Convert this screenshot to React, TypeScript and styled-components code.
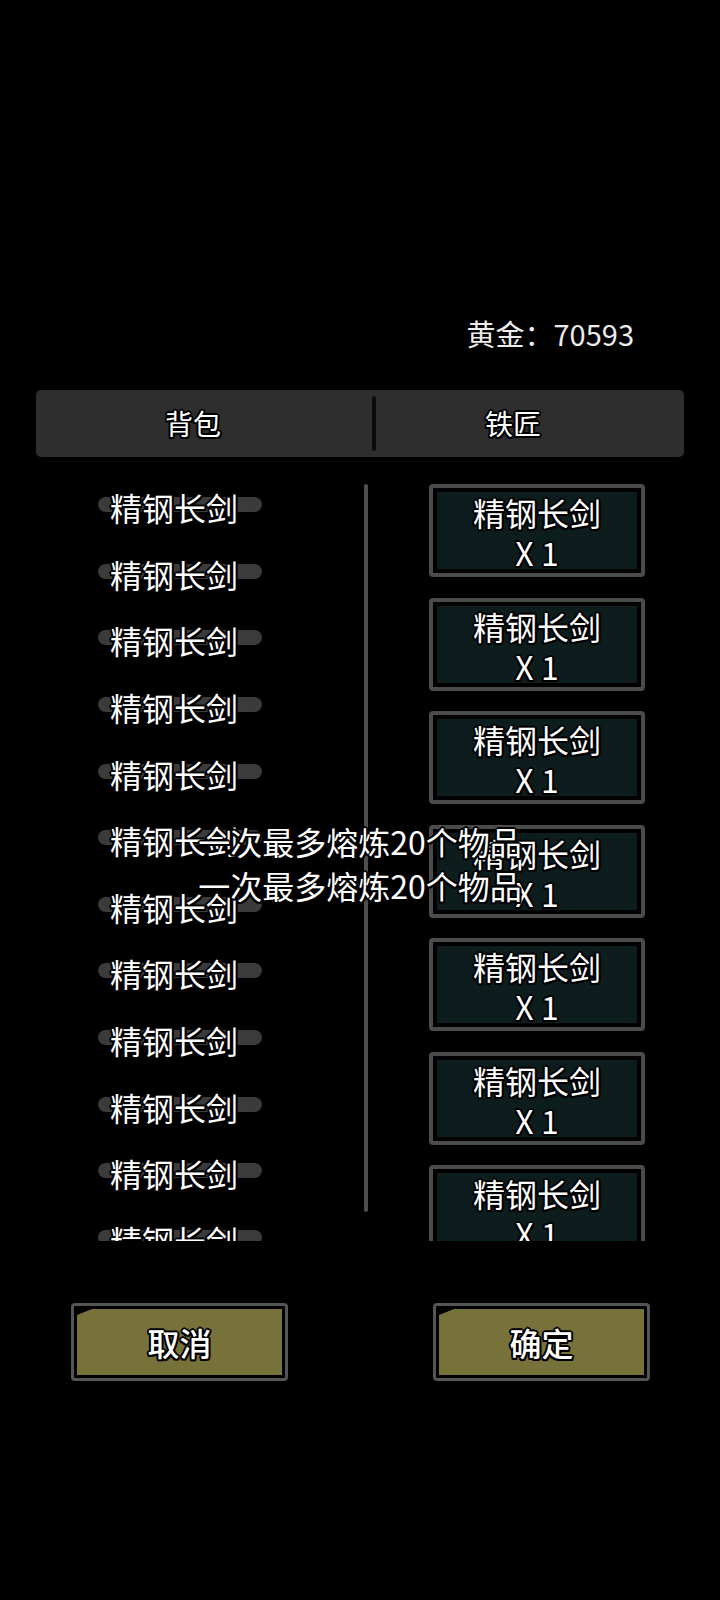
import React from "react";
import styled, { createGlobalStyle } from "styled-components";

const outline = `
  text-shadow:
    -1.5px -1.5px 0 #000, 1.5px -1.5px 0 #000, -1.5px 1.5px 0 #000, 1.5px 1.5px 0 #000,
    0 -2px 0 #000, 0 2px 0 #000, -2px 0 0 #000, 2px 0 0 #000;
`;

const GlobalStyle = createGlobalStyle`
  body {
    margin: 0;
    padding: 0;
    background-color: #000;
    font-family: "Noto Sans CJK SC", "Noto Sans", sans-serif;
    color: #fff;
  }
`;

const backpack = Array.from({ length: 12 }, () => "精钢长剑");
const smithy = Array.from({ length: 7 }, () => ({ name: "精钢长剑", count: 1 }));

const App: React.FC = () => {
  return (
    <Page>
      <GlobalStyle />
      <GoldRow>黄金：70593</GoldRow>
      <Tabs>
        <Tab $width={336} $shift={22}>背包</Tab>
        <TabDivider />
        <Tab $shift={34}>铁匠</Tab>
      </Tabs>
      <Content>
        <BagList>
          {backpack.map((name, i) => (
            <BagItem key={i}>
              <Pill />
              <BagLabel>{name}</BagLabel>
            </BagItem>
          ))}
        </BagList>
        <ScrollBar />
        <SmithList>
          {smithy.map((item, i) => (
            <Card key={i}>
              <CardInner>
                <CardLine>{item.name}</CardLine>
                <CardLine>X {item.count}</CardLine>
              </CardInner>
            </Card>
          ))}
        </SmithList>
      </Content>
      <ButtonRow>
        <Button>
          <ButtonFace>取消</ButtonFace>
        </Button>
        <Button>
          <ButtonFace>确定</ButtonFace>
        </Button>
      </ButtonRow>
      <ToastStack>
        <Toast>一次最多熔炼20个物品</Toast>
        <Toast>一次最多熔炼20个物品</Toast>
      </ToastStack>
    </Page>
  );
};

export default App;

const Page = styled.div`
  position: relative;
  width: 720px;
  min-height: 1600px;
  padding-top: 313px;
  box-sizing: border-box;
  background: #000;
`;

const GoldRow = styled.div`
  display: flex;
  justify-content: flex-end;
  padding-right: 86px;
  height: 40px;
  line-height: 40px;
  font-size: 29px;
  color: #ececec;
`;

const Tabs = styled.div`
  display: flex;
  align-items: center;
  margin: 37px 36px 0 36px;
  height: 67px;
  background-color: #2e2e2e;
  border-radius: 5px;
`;

const Tab = styled.div<{ $width?: number; $shift: number }>`
  flex: ${(p) => (p.$width ? `0 0 ${p.$width}px` : "1")};
  box-sizing: border-box;
  text-align: center;
  padding-right: ${(p) => p.$shift}px;
  font-size: 28px;
  line-height: 67px;
  color: #fff;
  ${outline}
`;

const TabDivider = styled.div`
  width: 4px;
  height: 55px;
  border-radius: 2px;
  background-color: #0c0c0c;
`;

const Content = styled.div`
  display: flex;
  margin-top: 17px;
  height: 767px;
  overflow: hidden;
`;

const BagList = styled.div`
  width: 364px;
  display: flex;
  flex-direction: column;
`;

const BagItem = styled.div`
  display: grid;
  align-items: center;
  justify-items: start;
  height: 66.6px;
  flex-shrink: 0;
`;

const Pill = styled.div`
  grid-area: 1 / 1;
  margin-left: 98px;
  margin-top: -5px;
  width: 164px;
  height: 15px;
  border-radius: 8px;
  background-color: #3b3b3b;
`;

const BagLabel = styled.div`
  grid-area: 1 / 1;
  margin-left: 110px;
  font-size: 32px;
  line-height: 40px;
  color: #fff;
  ${outline}
`;

const ScrollBar = styled.div`
  width: 4px;
  height: 728px;
  margin-top: 10px;
  border-radius: 2px;
  background-color: #4e4e4e;
  flex-shrink: 0;
`;

const SmithList = styled.div`
  display: flex;
  flex-direction: column;
  gap: 20.5px;
  padding: 10px 0 0 61px;
`;

const Card = styled.div`
  width: 216px;
  height: 93px;
  box-sizing: border-box;
  border: 4px solid #4b4b4b;
  border-radius: 4px;
  padding: 4px;
  background-color: #000;
  flex-shrink: 0;
`;

const CardInner = styled.div`
  height: 100%;
  box-sizing: border-box;
  padding-top: 0;
  background-color: #0d1c1c;
  text-align: center;
`;

const CardLine = styled.div`
  font-size: 32px;
  line-height: 40px;
  color: #fff;
  ${outline}
`;

const ButtonRow = styled.div`
  display: flex;
  gap: 145px;
  padding-left: 71px;
  margin-top: 62px;
`;

const Button = styled.div`
  width: 217px;
  height: 78px;
  box-sizing: border-box;
  border: 3px solid #555;
  border-radius: 4px;
  padding: 3px;
  background-color: #000;
`;

const ButtonFace = styled.div`
  height: 100%;
  display: flex;
  align-items: center;
  justify-content: center;
  background-color: #76723a;
  clip-path: polygon(15px 0, 100% 0, 100% 100%, 0 100%, 0 6px);
  font-size: 32px;
  font-weight: 500;
  color: #fff;
  ${outline}
`;

const ToastStack = styled.div`
  position: absolute;
  top: 819px;
  left: 0;
  right: 0;
  display: flex;
  flex-direction: column;
  align-items: center;
  pointer-events: none;
`;

const Toast = styled.div`
  font-size: 32px;
  line-height: 44px;
  color: #fff;
  ${outline}
`;
